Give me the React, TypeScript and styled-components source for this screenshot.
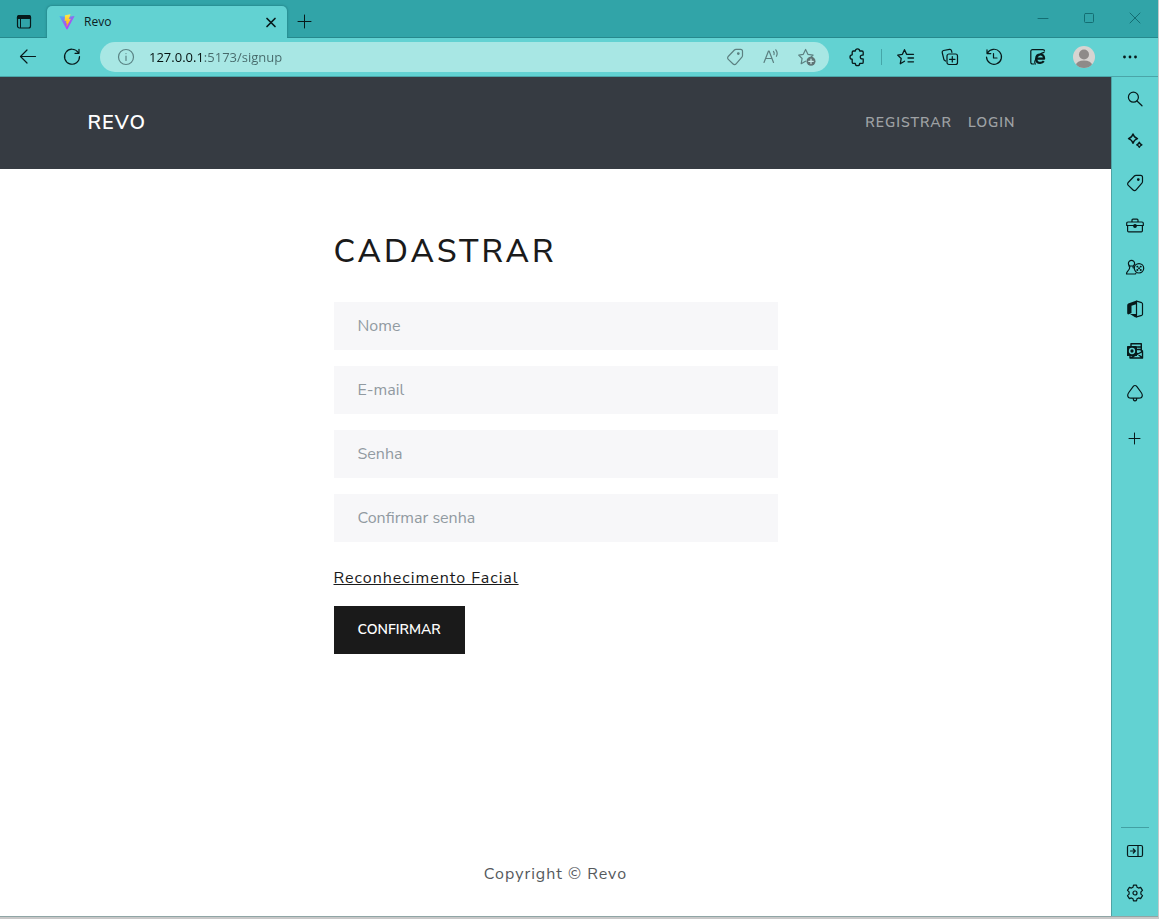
import React from "react";
import type { ReactNode } from "react";
import styled, { createGlobalStyle } from "styled-components";

const teal = "#62d2d2";
const tealDark = "#31a4a8";
const ink = "#071a1b";
const pageFont = `"Nunito Sans", Nunito, Lato, sans-serif`;
const chromeFont = `"Segoe UI", "Open Sans", sans-serif`;

const GlobalStyle = createGlobalStyle`
  *, *::before, *::after { box-sizing: border-box; }
  body { margin: 0; background: #c8c8c8; font-family: ${chromeFont}; }
  button, input { font: inherit; }
`;

const Window = styled.div`
  display: flex;
  flex-direction: column;
  min-height: calc(100vh - 2px);
  margin-right: 1px;
  border-bottom: 1px solid #8fa5a5;
  background: ${teal};
`;

const TitleBar = styled.header`
  display: flex;
  align-items: flex-end;
  height: 38px;
  padding-left: 6px;
  background: ${tealDark};
  border-bottom: 1px solid #26898d;
`;

const IconButton = styled.button<{ $w?: number; $h?: number; $color?: string }>`
  display: flex;
  flex: none;
  align-items: center;
  justify-content: center;
  width: ${(p) => p.$w ?? 36}px;
  height: ${(p) => p.$h ?? 32}px;
  padding: 0;
  border: 0;
  background: none;
  color: ${(p) => p.$color ?? ink};
`;

const Tab = styled.div`
  display: flex;
  align-items: center;
  width: 240px;
  height: 32px;
  margin: 0 0 -1px 5px;
  padding: 0 6px 0 12px;
  border-radius: 5px 5px 0 0;
  background: ${teal};
  box-shadow: 0 0 2px 1px #278c90;
  clip-path: inset(-3px -3px 0 -3px);
  font-size: 12px;
  line-height: 16px;
  color: #0c2022;
`;

const TabTitle = styled.span`
  flex: 1;
  padding-left: 9px;
`;

const WindowControls = styled.div`
  display: flex;
  align-self: flex-start;
  margin-left: auto;
`;

const Toolbar = styled.div`
  display: flex;
  align-items: center;
  height: 39px;
  padding: 0 10px;
  border-bottom: 1px solid #4aa5a8;
`;

const NavGroup = styled.div`
  display: flex;
  gap: 8px;
  margin-right: 10px;
`;

const AddressBar = styled.div`
  display: flex;
  flex: 1;
  align-items: center;
  height: 30px;
  padding: 0 4px 0 8px;
  border-radius: 15px;
  background: #a8e7e4;
`;

const AddressInput = styled.input`
  flex: 1;
  min-width: 0;
  margin-left: 5px;
  padding: 0;
  border: 0;
  outline: 0;
  font-size: 13px;
  line-height: 20px;
  background: linear-gradient(90deg, #04100f 54px, #46696a 54px);
  background-clip: text;
  -webkit-background-clip: text;
  color: transparent;
`;

const ToolGroup = styled.div`
  display: flex;
  align-items: center;
  gap: 8px;
  margin-left: 10px;
`;

const ToolDivider = styled.span`
  width: 1px;
  height: 16px;
  margin: 0 -2px;
  background: #45a6a8;
`;

const Body = styled.div`
  display: flex;
  flex: 1;
`;

const Page = styled.div`
  display: flex;
  flex: 1;
  flex-direction: column;
  min-width: 0;
  background: #fff;
  font-family: ${pageFont};
  font-size: 16px;
  line-height: 24px;
  color: #1a1a1a;
`;

const SiteHeader = styled.header`
  background: #363b42;
`;

const Container = styled.div`
  display: flex;
  align-items: center;
  justify-content: space-between;
  max-width: 960px;
  height: 92px;
  margin: 0 auto;
  padding: 0 12px;
`;

const Brand = styled.a`
  font-size: 20px;
  font-weight: 600;
  letter-spacing: 1px;
  color: #fff;
  text-decoration: none;
`;

const SiteNav = styled.nav`
  display: flex;
  gap: 16px;
  padding-right: 8px;
`;

const NavLink = styled.a`
  font-size: 14px;
  font-weight: 600;
  letter-spacing: 1px;
  color: #9fa2a5;
  text-decoration: none;
`;

const SignupForm = styled.form`
  display: flex;
  flex-direction: column;
  align-items: flex-start;
  gap: 16px;
  width: 100%;
  max-width: 444px;
  margin: 0 auto;
  padding-top: 63px;
`;

const Title = styled.h1`
  margin: 0 0 14px;
  font-size: 32px;
  font-weight: 500;
  line-height: 40px;
  letter-spacing: 3px;
`;

const Field = styled.input`
  width: 100%;
  height: 48px;
  padding: 0 24px;
  border: 0;
  border-radius: 0;
  background: #f7f7f9;
  color: #1a1a1a;
  &::placeholder { color: #919aa1; opacity: 1; }
`;

const FaceLink = styled.a`
  margin-top: 8px;
  letter-spacing: 1px;
  color: #1a1a1a;
`;

const SubmitButton = styled.button`
  height: 48px;
  padding: 0 24px;
  border: 0;
  background: #1a1a1a;
  color: #fff;
  font-size: 14px;
  font-weight: 600;
`;

const SiteFooter = styled.footer`
  margin-top: auto;
  padding-bottom: 30px;
  letter-spacing: 1px;
  text-align: center;
  color: #55595c;
`;

const Sidebar = styled.aside`
  display: flex;
  flex: none;
  flex-direction: column;
  justify-content: space-between;
  width: 47px;
  padding: 6px 0 7px;
  border-left: 1px solid #4fa3a5;
`;

const SideGroup = styled.div<{ $ruled?: boolean }>`
  display: flex;
  flex-direction: column;
  align-items: center;
  gap: 10px;
  margin: 0 9px;
  padding-top: ${(p) => (p.$ruled ? 7 : 0)}px;
  border-top: ${(p) => (p.$ruled ? "1px solid #42a0a3" : "0")};
`;

function Icon({ children, size = 20, sw = 1.2 }: { children: ReactNode; size?: number; sw?: number }) {
  return (
    <svg width={size} height={size} viewBox="0 0 20 20" fill="none" stroke="currentColor" strokeWidth={sw} strokeLinecap="round" strokeLinejoin="round" aria-hidden="true">
      {children}
    </svg>
  );
}

const TagIcon = () => (
  <Icon>
    <path d="M11 2.300h4.600a1.900 1.900 0 0 1 1.900 1.900v4.400a2.200 2.200 0 0 1-.6 1.600l-5.800 6.700a2 2 0 0 1-3 .1l-4.800-4.600a2 2 0 0 1-.1-2.900l6.200-6.500a2.200 2.200 0 0 1 1.600-.7z" />
    <circle cx="13.300" cy="6.600" r=".8" fill="currentColor" />
  </Icon>
);

const sideTools: { label: string; icon: ReactNode }[] = [
  { label: "Search", icon: <Icon><circle cx="8.400" cy="8.200" r="5" /><path d="M12 12l5 4.800" /></Icon> },
  {
    label: "Discover",
    icon: (
      <Icon sw={1.400}>
        <path d="M8 3c.8 2.600 1.900 3.800 4.500 4.700C9.900 8.600 8.800 9.700 8 12.300c-.8-2.600-1.900-3.700-4.500-4.600C6.100 6.800 7.200 5.600 8 3z" />
        <path d="M14.300 11.200c.5 1.500 1.100 2.100 2.600 2.600-1.500.5-2.100 1.100-2.600 2.600-.5-1.500-1.100-2.100-2.600-2.600 1.500-.5 2.100-1.100 2.600-2.600z" />
      </Icon>
    ),
  },
  { label: "Shopping", icon: <TagIcon /> },
  {
    label: "Tools",
    icon: (
      <Icon>
        <path d="M3 7h14c.8 0 1.300.5 1.300 1.200v2.300H1.700V8.200C1.700 7.500 2.200 7 3 7zM2.600 10.500v5.200c0 .7.500 1.100 1.100 1.100h12.600c.6 0 1.100-.4 1.100-1.100v-5.200M7 6.800V5.200c0-.7.400-1.100 1-1.100h4c.6 0 1 .4 1 1.100v1.600" />
        <circle cx="10" cy="11" r="1.300" fill="currentColor" />
      </Icon>
    ),
  },
  {
    label: "Games",
    icon: (
      <Icon>
        <path d="M3.800 9h5M4.500 8.800a3.100 3.100 0 1 1 4 0M4.900 9c0 2.600-.6 4-2.200 5.200-.9.700-1.200 1.400-1.200 2.800h8.700c.4 0 .6-.3.600-.7M8 9c0 .8.100 1.400.3 2" />
        <circle cx="14" cy="11.300" r="4.700" />
        <path d="M12.300 9.600h.1M15.700 9.600h.1M12.300 13h.1M15.700 13h.1M14 11.300h.1" strokeWidth="1.900" />
      </Icon>
    ),
  },
  {
    label: "Office",
    icon: (
      <Icon>
        <path d="M11.500 2.200l5.200 1.500c.5.200.8.500.8 1.100v10.400c0 .6-.3.900-.8 1.100l-5.200 1.500V2.200" />
        <path d="M11.600 1.500L4 4.200c-1.100.4-1.800 1.100-1.800 2.200v7.600c0 1.200.8 1.700 1.700 1.300l2.600-1.200V6.800L11.900 5zM5 15.100l6.900-.1v3.600l-1.900-.3z" fill="currentColor" stroke="none" />
      </Icon>
    ),
  },
  {
    label: "Outlook",
    icon: (
      <Icon sw={1.400}>
        <path d="M6 5V2.800h10.300v7M16.300 9l1.200 1v7H5v-2M11.500 12l6 5M17.500 10.500L6 16.700M12.500 6h3.500M12.500 8.500h3.500" />
        <rect x="2" y="5" width="10" height="10" rx=".6" fill="currentColor" stroke="none" />
        <circle cx="7" cy="10" r="2.400" stroke={teal} strokeWidth="1.500" />
      </Icon>
    ),
  },
  {
    label: "Drop",
    icon: (
      <Icon>
        <path d="M10 2.500c.8 0 1.300.4 1.900 1.200l4.300 5.800c.7 1 1.100 1.800 1.100 2.700 0 1.900-1.300 3-3.400 3H6.100c-2.100 0-3.400-1.100-3.400-3 0-.9.400-1.700 1.100-2.700l4.300-5.800c.6-.8 1.100-1.200 1.900-1.200zM8.300 15.200c0 1.700.6 2.600 1.700 2.600s1.700-.9 1.700-2.600" />
      </Icon>
    ),
  },
];

export default function App() {
  return (
    <>
      <GlobalStyle />
      <Window>
        <TitleBar>
          <IconButton aria-label="Tab actions">
            <Icon>
              <rect x="3.500" y="4.500" width="13" height="12.500" rx="2" />
              <path d="M3.500 7.500V6.200c0-1 .7-1.700 1.700-1.700h9.600c1 0 1.700.7 1.700 1.700v1.300z" fill="currentColor" />
              <path d="M6.500 8v8.500" strokeWidth="1" />
            </Icon>
          </IconButton>
          <Tab>
            <svg width="16" height="16" viewBox="0 0 16 16" aria-hidden="true">
              <defs>
                <linearGradient id="vee" x1="0" y1="0" x2=".6" y2="1">
                  <stop offset="0" stopColor="#41b8f5" />
                  <stop offset=".55" stopColor="#9b62ee" />
                  <stop offset="1" stopColor="#bd34fe" />
                </linearGradient>
                <linearGradient id="bolt" x1="0" y1="0" x2="0" y2="1">
                  <stop offset="0" stopColor="#ffea4a" />
                  <stop offset="1" stopColor="#ffa800" />
                </linearGradient>
              </defs>
              <path d="M15.400 2.600L8.400 15.200a.5.500 0 0 1-.8 0L.5 2.600a.5.500 0 0 1 .5-.7l7 1.200 6.900-1.200a.5.500 0 0 1 .5.700z" fill="url(#vee)" />
              <path d="M11.300.3L6.200 1.300a.3.300 0 0 0-.2.200l-.4 5.400c0 .2.100.3.300.2l1.500-.3-.5 2.300c0 .2.100.3.300.3l.9-.3-.7 3.300c0 .3.200.4.400.2l3.800-7.400c.1-.2-.1-.4-.3-.3l-1.500.2 1.700-4.500c0-.2-.1-.3-.2-.3z" fill="url(#bolt)" />
            </svg>
            <TabTitle>Revo</TabTitle>
            <IconButton $w={20} $h={20} aria-label="Close tab"><Icon sw={1.700}><path d="M6 6.500l8 8M14 6.500l-8 8" /></Icon></IconButton>
          </Tab>
          <IconButton aria-label="New tab"><Icon sw={1}><path d="M9.500 4v13M3 10.500h13" /></Icon></IconButton>
          <WindowControls>
            <IconButton $w={46} $h={36} $color="#146e73" aria-label="Minimize"><Icon sw={1}><path d="M5 10.500h10" /></Icon></IconButton>
            <IconButton $w={46} $h={36} $color="#146e73" aria-label="Maximize"><Icon sw={1}><rect x="5.500" y="5.500" width="9" height="9" rx="1" /></Icon></IconButton>
            <IconButton $w={46} $h={36} $color="#146e73" aria-label="Close"><Icon sw={1}><path d="M5 5l10 10M15 5L5 15" /></Icon></IconButton>
          </WindowControls>
        </TitleBar>

        <Toolbar>
          <NavGroup>
            <IconButton aria-label="Back"><Icon><path d="M17.500 9.500H2.500M9 3L2.500 9.500 9 16" /></Icon></IconButton>
            <IconButton aria-label="Refresh"><Icon><path d="M16.200 5.500A7.500 7.500 0 1 0 17.500 9.500M17 2.300v4h-4" /></Icon></IconButton>
          </NavGroup>
          <AddressBar>
            <IconButton $color="#5a8485" aria-label="Site information">
              <Icon><circle cx="10" cy="10" r="7.500" /><path d="M10 9v4.500M10 6.500v.1" /></Icon>
            </IconButton>
            <AddressInput aria-label="Address" defaultValue="127.0.0.1:5173/signup" spellCheck={false} />
            <IconButton $color="#5c8081" aria-label="Shopping offers"><TagIcon /></IconButton>
            <IconButton $color="#5c8081" aria-label="Read aloud">
              <Icon><path d="M3 15.500L7.500 4h.6l4.400 11.500M4.500 11.500h6.500M12.500 4.500c.8.900.9 2 .5 3.100M14.800 2.800c1.600 2 1.700 4.400.6 6.500" /></Icon>
            </IconButton>
            <IconButton $color="#5c8081" aria-label="Add to favorites">
              <Icon>
                <path d="M8.500 14.200l-4.300 2.500.9-5.200-3.400-3.400 4.600-.8 2.300-4.800 2.300 4.800 5.200.8-2 1.900" />
                <circle cx="14" cy="14.300" r="4.500" fill="#5f7475" stroke="none" />
                <path d="M14 12v4.600M11.700 14.300h4.600" stroke="#c9eeec" />
              </Icon>
            </IconButton>
          </AddressBar>
          <ToolGroup>
            <IconButton aria-label="Extensions">
              <Icon sw={1.300}><path d="M6.500 4h1.800a2.200 2.200 0 0 1 4.400 0H15c.7 0 1.200.5 1.200 1.200v2.900h-1a1.900 1.900 0 0 0 0 3.800h1v3.300c0 .7-.5 1.200-1.200 1.200h-2.300a2.200 2.200 0 0 1-4.400 0H6.500c-.8 0-1.300-.5-1.300-1.200v-3a2.200 2.200 0 0 1 0-4.400V5.200C5.200 4.500 5.700 4 6.500 4z" /></Icon>
            </IconButton>
            <ToolDivider />
            <IconButton aria-label="Favorites">
              <Icon sw={1.300}><path d="M8.500 14.200l-4.200 2.500.9-5.200-3.500-3.400 4.700-.8L8.500 2.700l2.100 4.600h6.900M12 11h5.500M12 14.800h5.500" /></Icon>
            </IconButton>
            <IconButton aria-label="Collections">
              <Icon sw={1.200}><path d="M5.500 14L4 12.800 2.200 5.500c-.2-1 .4-1.700 1.300-2L9.500 2.400c1-.2 1.700.2 2 1.200l.4 1.700" /><rect x="7" y="7" width="10.500" height="10.500" rx="2" /><path d="M12.300 9.500v5.500M9.500 12.300H15" /></Icon>
            </IconButton>
            <IconButton aria-label="History">
              <Icon><path d="M3.400 6.200A7.500 7.500 0 1 1 2.500 10M3 2.800v3.800h3.800M9.500 6.500V11H13" /></Icon>
            </IconButton>
            <IconButton aria-label="Internet Explorer mode">
              <Icon>
                <path d="M6 17H4.500c-1 0-1.700-.7-1.700-1.700V4.300c0-1 .7-1.700 1.700-1.700h10.300c1 0 1.700.5 1.700 1.300" />
                <path d="M8.400 11.700h7.700c0-2.500-1.400-4.200-3.900-4.200s-4 1.800-4 4.200c0 2.500 1.700 4.200 4 4.200 1.600 0 2.800-.6 3.600-1.700" strokeWidth="2.200" strokeLinecap="butt" />
                <path d="M7.300 17c-2-2.700 2.700-10.300 8.700-11.700" />
              </Icon>
            </IconButton>
            <IconButton $w={40} aria-label="Profile">
              <svg width="22" height="22" viewBox="0 0 22 22" aria-hidden="true">
                <clipPath id="avatar"><circle cx="11" cy="11" r="11" /></clipPath>
                <g clipPath="url(#avatar)">
                  <path fill="#d7d4d1" d="M0 0h22v22H0z" />
                  <circle cx="11" cy="8.500" r="5" fill="#8e8b89" />
                  <ellipse cx="11" cy="19" rx="8" ry="4.500" fill="#8e8b89" />
                </g>
              </svg>
            </IconButton>
            <IconButton aria-label="Settings and more">
              <Icon><g fill="currentColor" stroke="none"><circle cx="4.500" cy="10" r="1.400" /><circle cx="10" cy="10" r="1.400" /><circle cx="15.500" cy="10" r="1.400" /></g></Icon>
            </IconButton>
          </ToolGroup>
        </Toolbar>

        <Body>
          <Page>
            <SiteHeader>
              <Container>
                <Brand href="#">REVO</Brand>
                <SiteNav>
                  <NavLink href="#signup">REGISTRAR</NavLink>
                  <NavLink href="#login">LOGIN</NavLink>
                </SiteNav>
              </Container>
            </SiteHeader>
            <SignupForm>
              <Title>CADASTRAR</Title>
              <Field type="text" placeholder="Nome" aria-label="Nome" />
              <Field type="email" placeholder="E-mail" aria-label="E-mail" />
              <Field type="password" placeholder="Senha" aria-label="Senha" />
              <Field type="password" placeholder="Confirmar senha" aria-label="Confirmar senha" />
              <FaceLink href="#facial">Reconhecimento Facial</FaceLink>
              <SubmitButton type="button">CONFIRMAR</SubmitButton>
            </SignupForm>
            <SiteFooter>Copyright © Revo</SiteFooter>
          </Page>
          <Sidebar>
            <SideGroup>
              {sideTools.map((tool) => (
                <IconButton key={tool.label} aria-label={tool.label}>{tool.icon}</IconButton>
              ))}
              <IconButton $h={38} aria-label="Add"><Icon sw={1}><path d="M9.500 5v11M4 10.500h11" /></Icon></IconButton>
            </SideGroup>
            <SideGroup $ruled>
              <IconButton aria-label="Hide sidebar">
                <Icon><rect x="2.500" y="4.500" width="15" height="11" rx="1.500" /><path d="M13 4.500v11M5.500 10h4.500M8.300 8l2 2-2 2" /></Icon>
              </IconButton>
              <IconButton aria-label="Settings">
                <Icon>
                  <path d="M8 4.200l.5-2.100h3l.5 2.100 1.600.9 2-.7 1.900 3-1.600 1.500v2.200l1.600 1.500-1.900 3-2-.7-1.600.9-.5 2.100h-3L8 15.800l-1.600-.9-2 .7-1.900-3 1.600-1.500V8.900L2.500 7.400l1.900-3 2 .7z" />
                  <circle cx="10" cy="10" r="2" />
                </Icon>
              </IconButton>
            </SideGroup>
          </Sidebar>
        </Body>
      </Window>
    </>
  );
}
